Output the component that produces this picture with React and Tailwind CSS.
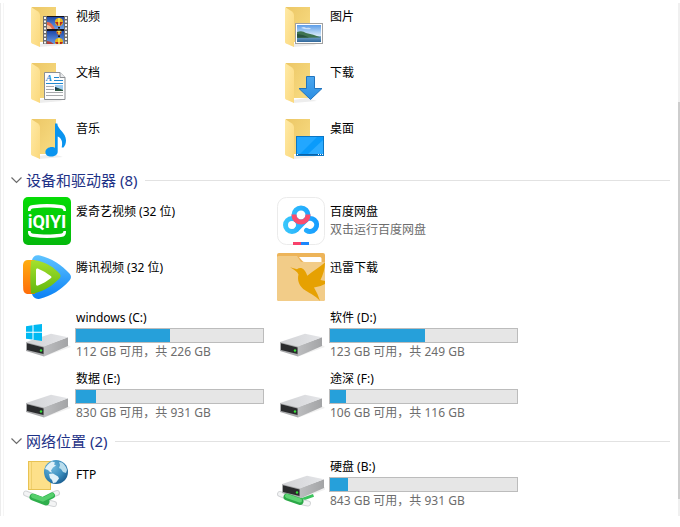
import React from "react";

function FolderBase() {
  return (
    <>
      <defs>
        <linearGradient id="folderBack" x1="0" y1="0" x2="1" y2="1">
          <stop offset="0" stopColor="#ecc766" />
          <stop offset="1" stopColor="#f9dd84" />
        </linearGradient>
        <linearGradient id="folderFlap" x1="0" y1="0" x2="1" y2="1">
          <stop offset="0" stopColor="#ffeaa6" />
          <stop offset="1" stopColor="#fbd87c" />
        </linearGradient>
      </defs>
      <path d="M16 45L40 43L30 40L16 42Z" fill="#ededed" />
      <rect x="9" y="5" width="24" height="35" fill="url(#folderBack)" />
      <path d="M8 5L15 9.500Q17 11 17 13V45L9 41.500Q8 41 8 40Z" fill="url(#folderFlap)" />
    </>
  );
}

function Icon({ children }) {
  return (
    <svg className="size-12 shrink-0" viewBox="0 0 48 48" aria-hidden="true">
      {children}
    </svg>
  );
}

function Balloon({ x, y, r }) {
  return (
    <g>
      <circle cx={x} cy={y} r={r} fill="#e9b51c" />
      <path d={`M${x - r} ${y}h${r * 2}l${-r + 1} ${r}h-2z`} fill="#b3261e" />
      <path d={`M${x} ${y - r}v${r * 2}`} stroke="#f8ec5a" strokeWidth="1.500" />
      <rect x={x - 1} y={y + r + 1} width="2" height="1.500" fill="#201811" />
    </g>
  );
}

function VideosIcon() {
  return (
    <Icon>
      <FolderBase />
      <defs>
        <linearGradient id="filmSky" x1="0" y1="0" x2="0" y2="1">
          <stop offset="0" stopColor="#1d47a8" />
          <stop offset="1" stopColor="#6c9fe8" />
        </linearGradient>
        <clipPath id="filmClip">
          <rect x="24" y="15" width="17" height="27" />
        </clipPath>
      </defs>
      <rect x="20" y="14" width="25" height="28" fill="#6d6d6d" />
      <path d="M22 15v27M43 15v27" stroke="#f4f4f4" strokeWidth="2" strokeDasharray="2 1.500" />
      <rect x="24" y="14" width="17" height="28" fill="#15131c" />
      <rect x="24" y="15" width="17" height="12" fill="url(#filmSky)" />
      <rect x="24" y="29" width="17" height="13" fill="url(#filmSky)" />
      <g clipPath="url(#filmClip)">
        <path d="M24 20q4-1 8 7h-8z" fill="#e46a4f" />
        <path d="M24 23q3 0 5 4h-5z" fill="#efc0a0" />
        <path d="M24 39q4 0 7 3h-7z" fill="#b5423a" />
        <Balloon x={36} y={20} r={4} />
        <Balloon x={36} y={30} r={2.5} />
        <Balloon x={36} y={40} r={4} />
      </g>
      <path d="M24 28h17" stroke="#15131c" strokeWidth="1.500" />
    </Icon>
  );
}

function DocumentsIcon() {
  return (
    <Icon>
      <FolderBase />
      <path d="M21.500 14.500h15.500l5 5v22h-20.500z" fill="#fdfdfd" stroke="#8b8f93" />
      <path d="M37 14.500v5h5" fill="#e9ebed" stroke="#8b8f93" />
      <text x="23" y="23" className="font-['Liberation_Serif',serif] text-[9px] font-bold italic" fill="#1b87d2">A</text>
      <path d="M31 19.500h5M31 22.500h9M23 25.500h17" stroke="#2088cf" />
      <path d="M23 28.500h8M23 31.500h8M23 34.500h17M23 37.500h17" stroke="#a7a9ac" />
      <rect x="32" y="27" width="8" height="6" fill="#9fcdf2" />
      <path d="M32 29l3 1 5 2v1h-8z" fill="#315c45" />
      <path d="M32 29l4 2-4 1z" fill="#173a52" />
    </Icon>
  );
}

function MusicIcon() {
  return (
    <Icon>
      <FolderBase />
      <path
        d="M32 9.500h2.300c0.300 6 8.700 9 8.700 17 0 3-1 5-2.500 7h-1.800c1.500-7-1-9.500-4-11v15c0 3.200-3 5-6.600 5-3.300 0-5.700-1.600-5.700-4.300 0-3 3-5.200 6.500-5.200 1.500 0 2.500.4 3.100 1z"
        fill="#0a94ef"
      />
    </Icon>
  );
}

function PicturesIcon() {
  return (
    <Icon>
      <FolderBase />
      <defs>
        <linearGradient id="photoSky" x1="0" y1="0" x2="0" y2="1">
          <stop offset="0" stopColor="#5c9de8" />
          <stop offset="1" stopColor="#dcecfa" />
        </linearGradient>
        <linearGradient id="photoSea" x1="0" y1="0" x2="0" y2="1">
          <stop offset="0" stopColor="#7fabd0" />
          <stop offset="1" stopColor="#2f679b" />
        </linearGradient>
      </defs>
      <rect x="18.500" y="21.500" width="27" height="20" fill="#fff" stroke="#a1a1a1" />
      <rect x="20" y="23" width="24" height="11" fill="url(#photoSky)" />
      <rect x="20" y="34" width="24" height="6" fill="url(#photoSea)" />
      <path d="M24 26q3-2 5 0 4-1 5 1-5 1-10-1z" fill="#eaf3fd" opacity="0.700" />
      <path d="M20 30q5-2 9 1 7 1 15 4.500l-24 .5z" fill="#3f7350" />
      <path d="M20 32q6 0 12 3.500h-12z" fill="#28523f" />
    </Icon>
  );
}

function DownloadsIcon() {
  return (
    <Icon>
      <FolderBase />
      <defs>
        <linearGradient id="downArrow" x1="0" y1="0" x2="0" y2="1">
          <stop offset="0" stopColor="#4ba7ef" />
          <stop offset="1" stopColor="#2c8ee2" />
        </linearGradient>
      </defs>
      <path d="M29.500 18.500h8v12h7.500L33.500 41.500 22 30.500h7.500z" fill="url(#downArrow)" stroke="#2174bf" />
    </Icon>
  );
}

function DesktopIcon() {
  return (
    <Icon>
      <FolderBase />
      <rect x="19.500" y="22.500" width="27" height="19" fill="#0a9bfb" stroke="#0b76c4" />
      <path d="M20 23h20L23 40h-3z" fill="#22a7ff" />
      <path d="M46 26v14H31z" fill="#2cabff" />
      <rect x="20" y="40" width="26" height="1" fill="#0a62a8" />
      <path d="M20 40.500h1M41 40.500h1M43 40.500h1M45 40.500h1" stroke="#fff" />
    </Icon>
  );
}

function IqiyiIcon() {
  return (
    <Icon>
      <defs>
        <linearGradient id="iqiyiGreen" x1="0" y1="0" x2="0" y2="1">
          <stop offset="0" stopColor="#05dc05" />
          <stop offset="1" stopColor="#04b80c" />
        </linearGradient>
      </defs>
      <rect width="48" height="48" rx="5" fill="url(#iqiyiGreen)" />
      <path d="M5 14c0-4 1-5.500 5-6 9-1.300 19-1.300 28 0 4 .5 5 2 5 6h-2.500c-.3-2-1-2.500-3.500-2.800-8-1-18-1-26 0-2.500.3-3.200.8-3.500 2.800z" fill="#fff" />
      <path d="M5 34c0 4 1 5.500 5 6 9 1.300 19 1.300 28 0 4-.5 5-2 5-6h-2.500c-.3 2-1 2.500-3.500 2.800-8 1-18 1-26 0-2.500-.3-3.200-.8-3.500-2.800z" fill="#fff" />
      <text x="24" y="31" textAnchor="middle" className="font-[Roboto,sans-serif] text-[18px] font-bold" fill="#fff">iQIYI</text>
    </Icon>
  );
}

function TencentVideoIcon() {
  return (
    <Icon>
      <defs>
        <linearGradient id="tvBlue" x1="0" y1="0" x2="0" y2="1">
          <stop offset="0" stopColor="#5fc4ff" />
          <stop offset="1" stopColor="#0a80f5" />
        </linearGradient>
        <linearGradient id="tvOrange" x1="0" y1="0" x2="0" y2="1">
          <stop offset="0" stopColor="#ffae10" />
          <stop offset="1" stopColor="#ff6d0a" />
        </linearGradient>
        <linearGradient id="tvGreen" x1="0" y1="0" x2="0" y2="1">
          <stop offset="0" stopColor="#a5e02d" />
          <stop offset="1" stopColor="#62b80e" />
        </linearGradient>
      </defs>
      <path d="M9 7c1-4 4-5.500 8-4.500C28 5 39 12 46.500 20.500c2 2.300 2 4.500 0 7C38 37 28 43 17 45.700c-4 1-7-1-8-4.700z" fill="url(#tvBlue)" />
      <path d="M0 12c.3-3.500 2-5 5-5h7v34H5.500C2 41 .5 39.500.2 36-.1 28-.1 20 0 12z" fill="url(#tvOrange)" />
      <path d="M8 8c2-1 5-.8 8 0 8 2.300 14.500 6 20.500 12.500 1.500 1.800 1.300 3.700-.5 5.500C29.500 32.500 22 37.500 12 40.200c-1.500.3-3 .2-4 0-1-11-1-21.500 0-32.200z" fill="url(#tvGreen)" />
      <path d="M13 17.500c0-2 1-2.300 2.700-1.600 4.500 1.800 8 4 12 7 1 .8 1 1.600 0 2.400-3.800 3-7.500 5.200-12 7C14 33 13 32.700 13 30.700z" fill="#fff" />
    </Icon>
  );
}

function BaiduDiskIcon() {
  return (
    <Icon>
      <defs>
        <linearGradient id="baiduBlue" gradientUnits="userSpaceOnUse" x1="6" y1="0" x2="42" y2="0">
          <stop offset="0" stopColor="#3ac8fb" />
          <stop offset="1" stopColor="#159bff" />
        </linearGradient>
      </defs>
      <rect x="0.500" y="0.500" width="47" height="47" rx="9" fill="#fff" stroke="#ebebeb" />
      <g fill="none" strokeWidth="5" strokeLinecap="round">
        <circle cx="24" cy="18" r="7" stroke="url(#baiduBlue)" />
        <circle cx="15" cy="28" r="6.500" stroke="url(#baiduBlue)" />
        <path d="M19.600 32.600L28.400 23.400A6.500 6.500 0 1 1 29.500 33.300" stroke="url(#baiduBlue)" />
        <path d="M17 17.500v.5a7 7 0 0 0 14 0v-.5" stroke="#fb4d6e" strokeLinecap="butt" />
      </g>
      <rect x="16" y="45" width="8" height="3" fill="#f8416a" />
      <rect x="24" y="45" width="8" height="3" fill="#1c87fb" />
    </Icon>
  );
}

function XunleiIcon() {
  return (
    <Icon>
      <rect width="48" height="48" rx="2" fill="#edb459" />
      <path d="M0 4q0-1 2-1h18l4 6h24v37q0 2-2 2H2q-2 0-2-2z" fill="#f2cc88" />
      <path d="M22 4h21q1.500 0 1.500 1.500V9H28q-2 0-3-1.500z" fill="#fff" />
      <path d="M13 14.300l7 1.900C22 14.500 25 14.500 27 16.700c1.800 2 2.500 4 3.300 6C36 18 43 14 48 9.500 48 16 46 22 43.500 27L48 28v3q-5 3-11 3.500Q41 41 43 48C39 43 34 41 28.500 37.500 22 33.500 20 27 21.500 21.500 20.500 19 17 16.500 13 14.300z" fill="#e6a102" />
    </Icon>
  );
}

function DriveBody() {
  return (
    <>
      <defs>
        <linearGradient id="driveTop" x1="0" y1="0" x2="1" y2="0">
          <stop offset="0" stopColor="#d2d3d6" />
          <stop offset="1" stopColor="#e4e5e8" />
        </linearGradient>
        <linearGradient id="driveSide" x1="0" y1="0" x2="1" y2="0">
          <stop offset="0" stopColor="#bcbdbf" />
          <stop offset="1" stopColor="#a3a4a6" />
        </linearGradient>
      </defs>
      <path d="M20 46l28-10-4-3z" fill="#f0f0f0" />
      <path d="M21 35L45 26.300V35L21 45.500z" fill="url(#driveSide)" />
      <path d="M3 31L28 22.700 45 26.300 21 35.500z" fill="url(#driveTop)" />
      <path d="M3 31L21 35.500V45.500L3 40z" fill="#a9aaac" />
      <path d="M4 32.300L20.500 36.500V43L4 39z" fill="#2a2b2d" />
      <circle cx="18" cy="39.500" r="1.200" fill="#38e03a" />
    </>
  );
}

function DriveIcon() {
  return (
    <Icon>
      <DriveBody />
    </Icon>
  );
}

function SystemDriveIcon() {
  return (
    <Icon>
      <DriveBody />
      <path d="M3 15.200L9.500 14.200V20.700H3zM10.500 14L19 13V20.700H10.500zM3 21.700H9.500V28.500L3 27.700zM10.500 21.700H19V30L10.500 28.700z" fill="#00b9f2" />
    </Icon>
  );
}

function CablePlug({ x1, y1, x2, y2 }) {
  return (
    <g strokeLinecap="round">
      <path d={`M${x1} ${y1}L${x2} ${y2}`} stroke="#d3d5d7" strokeWidth="6" />
      <path d={`M${x1} ${y1}L${x2} ${y2}`} stroke="#f3f4f5" strokeWidth="4" />
    </g>
  );
}

function NetworkDriveIcon() {
  return (
    <Icon>
      <path d="M22 39L36 34" stroke="#3cc45d" strokeWidth="6" />
      <CablePlug x1={3} y1={34} x2={8} y2={36} />
      <CablePlug x1={26} y1={42.5} x2={31} y2={43.5} />
      <g transform="translate(2 -7)">
        <DriveBody />
      </g>
      <path d="M10 37L23 41.500" stroke="#2ba847" strokeWidth="7" strokeLinecap="round" />
      <path d="M10 36L23 40.500" stroke="#5fd475" strokeWidth="4" strokeLinecap="round" />
    </Icon>
  );
}

function FtpIcon() {
  return (
    <Icon>
      <defs>
        <radialGradient id="globeSea" cx="0.350" cy="0.300" r="0.750">
          <stop offset="0" stopColor="#6fb8de" />
          <stop offset="0.600" stopColor="#3a8dbd" />
          <stop offset="1" stopColor="#1b5f92" />
        </radialGradient>
      </defs>
      <rect x="5.500" y="1.500" width="22" height="28" fill="#fde08a" stroke="#e8c253" />
      <path d="M8.500 2v27" stroke="#efcf6c" />
      <circle cx="33" cy="12" r="12" fill="url(#globeSea)" />
      <path d="M22 9q2-5 7-7.500l3 1-1 2 2 1-3 2-2 3 1 2-2-.5-2-2z" fill="#e0f1f9" />
      <path d="M26 14l4-.5 5 3 1 2-3 4-3 .5-1-3-2-2z" fill="#e0f1f9" />
      <path d="M36 2l3 .5q4 3 5 7.500l-1 3-3-1-2-3-2-1 1-3z" fill="#b9dded" />
      <CablePlug x1={3} y1={33.5} x2={8} y2={35.5} />
      <CablePlug x1={30} y1={34.5} x2={34} y2={33} />
      <CablePlug x1={25} y1={42.5} x2={31} y2={44} />
      <path d="M20 40L29 35.500" stroke="#2fb350" strokeWidth="6" strokeLinecap="round" />
      <path d="M10 37L23 42" stroke="#2fae4c" strokeWidth="7" strokeLinecap="round" />
      <path d="M10 36L20 39.500L29 35" fill="none" stroke="#55cf6c" strokeWidth="4" strokeLinecap="round" strokeLinejoin="round" />
    </Icon>
  );
}

const folders = [
  { name: "视频", icon: VideosIcon },
  { name: "图片", icon: PicturesIcon },
  { name: "文档", icon: DocumentsIcon },
  { name: "下载", icon: DownloadsIcon },
  { name: "音乐", icon: MusicIcon },
  { name: "桌面", icon: DesktopIcon },
];

const apps = [
  { name: "爱奇艺视频 (32 位)", icon: IqiyiIcon },
  { name: "百度网盘", note: "双击运行百度网盘", icon: BaiduDiskIcon },
  { name: "腾讯视频 (32 位)", icon: TencentVideoIcon },
  { name: "迅雷下载", icon: XunleiIcon },
];

const drives = [
  { name: "windows (C:)", free: 112, total: 226, icon: SystemDriveIcon },
  { name: "软件 (D:)", free: 123, total: 249, icon: DriveIcon },
  { name: "数据 (E:)", free: 830, total: 931, icon: DriveIcon },
  { name: "途深 (F:)", free: 106, total: 116, icon: DriveIcon },
];

function Tile({ item }) {
  const Glyph = item.icon;
  return (
    <li className="flex items-start gap-1">
      <Glyph />
      <div className="pt-1.5 pl-px">
        <p>{item.name}</p>
        {item.note && <p className="text-[#6d6d6d]">{item.note}</p>}
      </div>
    </li>
  );
}

function DriveTile({ drive }) {
  const Glyph = drive.icon;
  const used = drive.total - drive.free;
  return (
    <li className="flex items-center gap-1">
      <Glyph />
      <div className="w-[189px]">
        <p className="pl-px">{drive.name}</p>
        <div
          role="meter"
          aria-label={drive.name}
          aria-valuemin={0}
          aria-valuemax={drive.total}
          aria-valuenow={used}
          className="mt-px h-[15px] border border-[#bcbcbc] bg-[#e6e6e6]"
        >
          <div className="h-full bg-[#26a0da]" style={{ width: `${(used / drive.total) * 100}%` }} />
        </div>
        <p className="pl-px text-[#6d6d6d]">
          {drive.free} GB 可用，共 {drive.total} GB
        </p>
      </div>
    </li>
  );
}

function SectionHeader({ title }) {
  return (
    <h2 className="mb-[7px] flex items-center gap-2 pr-2 pl-[7px]">
      <button type="button" className="flex items-center gap-1 text-[15px] leading-5 text-[#1e3287]">
        <svg className="h-2 w-[11px]" viewBox="0 0 11 8" aria-hidden="true">
          <path d="M0.500 1.500L5.500 6.500L10.500 1.500" fill="none" stroke="#6b6b6b" strokeWidth="1.200" />
        </svg>
        {title}
      </button>
      <span className="h-px flex-1 bg-[#e2e2e2]" />
    </h2>
  );
}

export default function App() {
  return (
    <div className="flex bg-white font-['Noto_Sans','Noto_Sans_CJK_SC',sans-serif] text-xs leading-[18px] text-black">
      <div className="mt-[3px] w-1 border-r border-l border-r-[#f5f5f5] border-l-[#ececec]" />
      <main className="min-w-0 flex-1 pt-0.5 pb-1.5">
        <ul className="grid grid-cols-[repeat(auto-fill,254px)] gap-y-2 pb-2 pl-[19px]">
          {folders.map((item) => (
            <Tile key={item.name} item={item} />
          ))}
        </ul>

        <section>
          <SectionHeader title="设备和驱动器 (8)" />
          <ul className="grid grid-cols-[repeat(auto-fill,254px)] gap-y-2 pb-2 pl-[19px]">
            {apps.map((item) => (
              <Tile key={item.name} item={item} />
            ))}
          </ul>
          <ul className="grid grid-cols-[repeat(auto-fill,254px)] gap-y-[9px] pb-[9px] pl-[19px]">
            {drives.map((drive) => (
              <DriveTile key={drive.name} drive={drive} />
            ))}
          </ul>
        </section>

        <section>
          <SectionHeader title="网络位置 (2)" />
          <ul className="grid grid-cols-[repeat(auto-fill,254px)] items-center pl-[19px]">
            <Tile item={{ name: "FTP", icon: FtpIcon }} />
            <DriveTile drive={{ name: "硬盘 (B:)", free: 843, total: 931, icon: NetworkDriveIcon }} />
          </ul>
        </section>
      </main>
      <div className="mt-[3px] flex w-0.5 flex-col bg-[#f0f0f0] pb-[17px]">
        <div className="h-1/5" />
        <div className="flex-1 bg-[#cdcdcd]" />
      </div>
    </div>
  );
}
